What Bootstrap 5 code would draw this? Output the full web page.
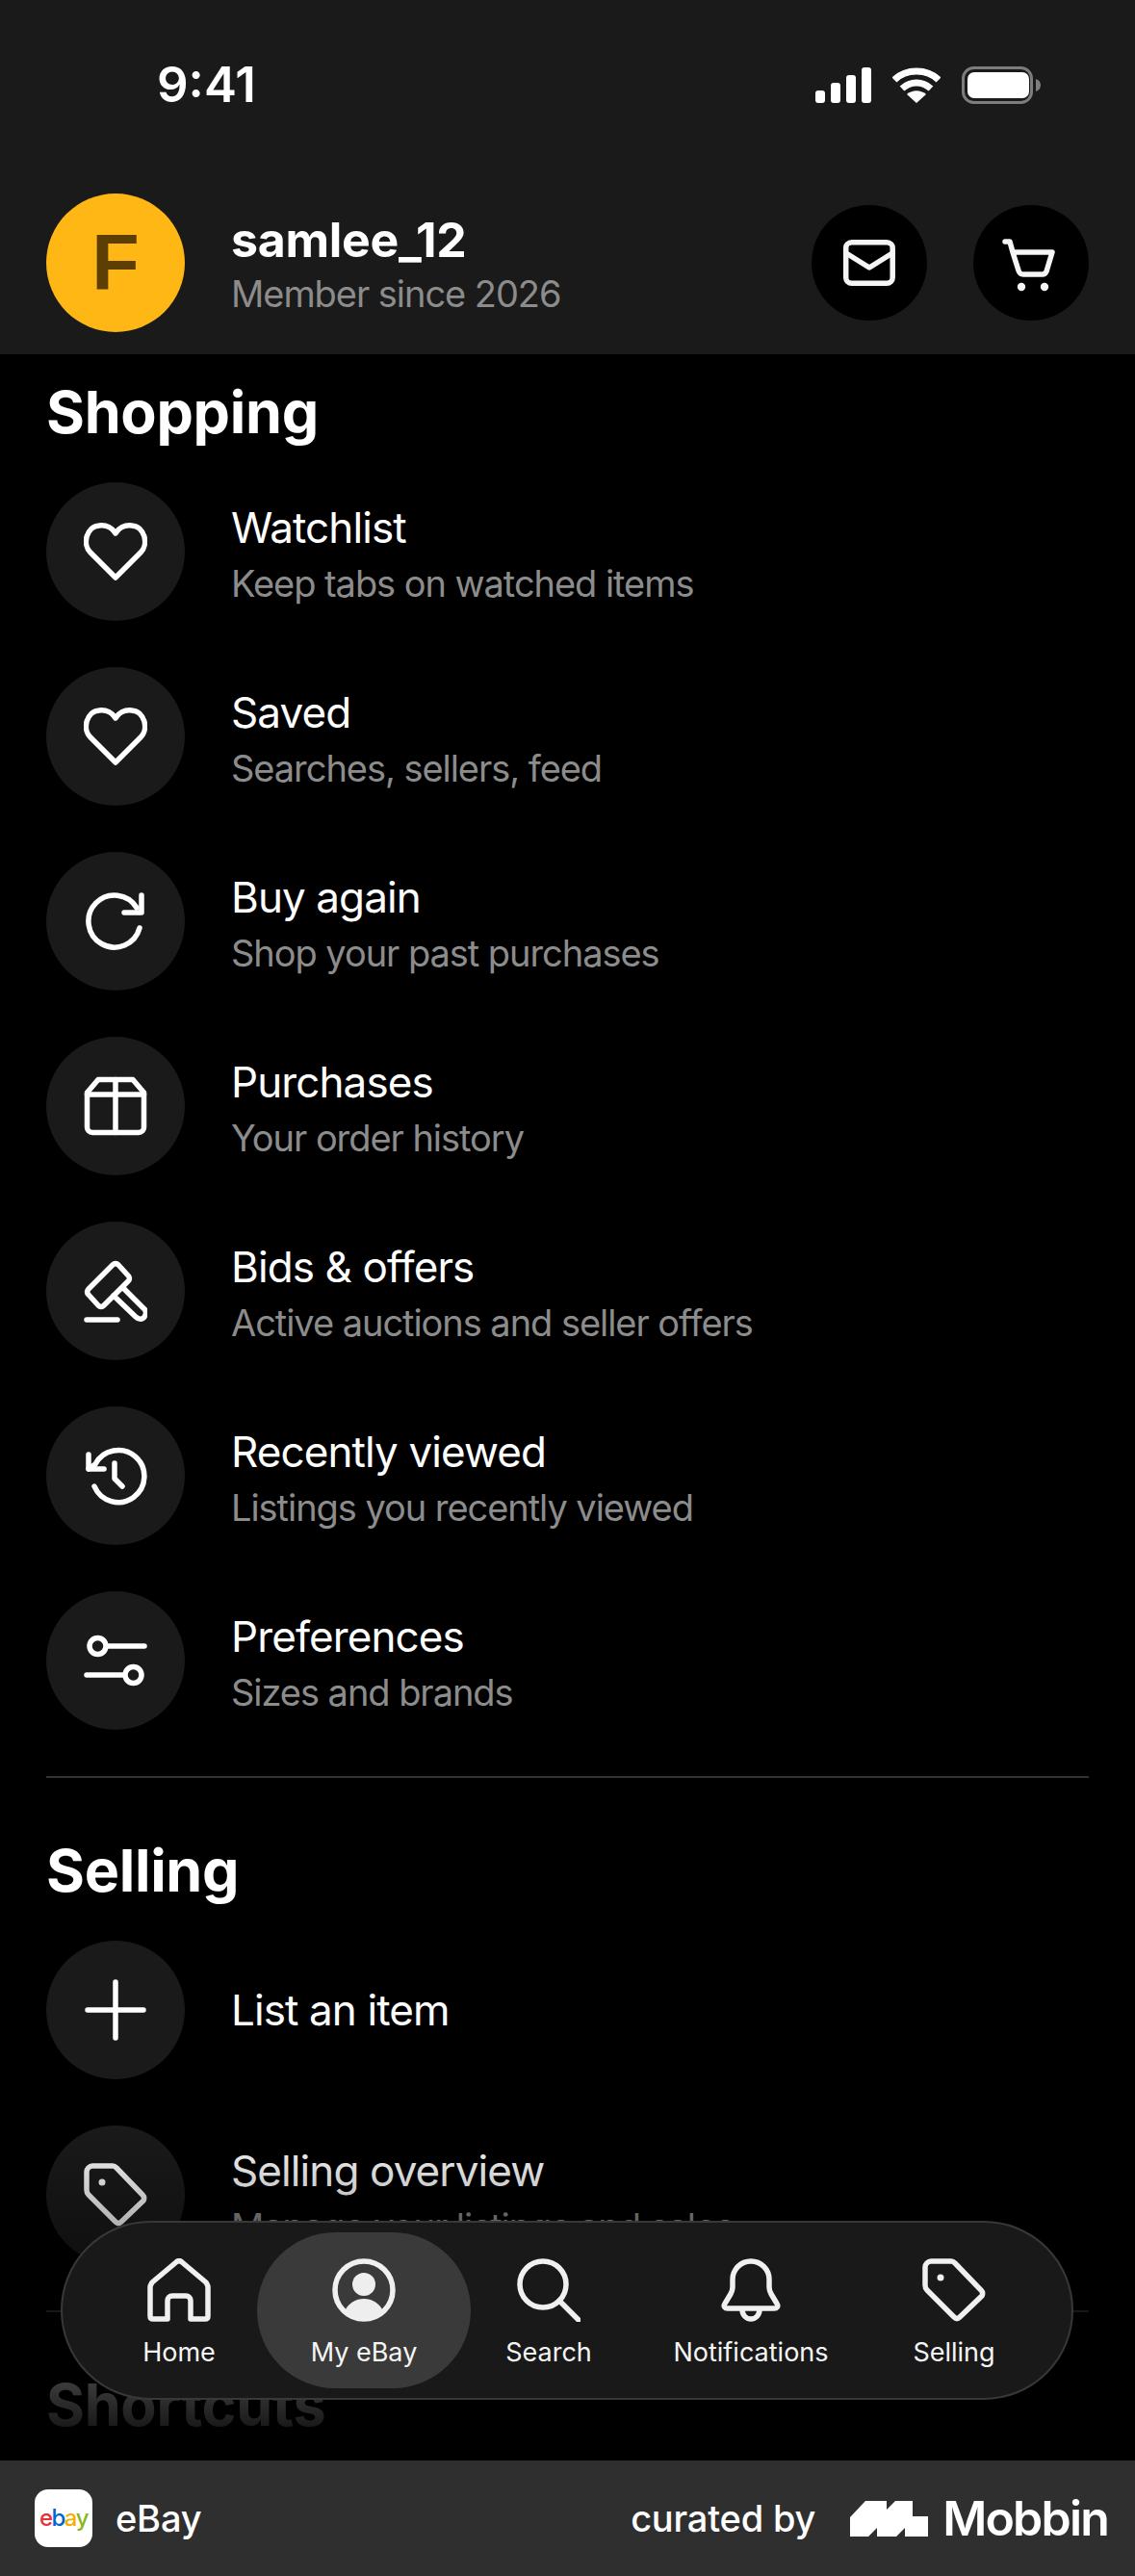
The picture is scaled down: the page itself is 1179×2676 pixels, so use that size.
<!DOCTYPE html>
<html lang="en">
<head>
  <meta charset="UTF-8" />
  <title>My eBay</title>
  <meta name="viewport" content="width=device-width, initial-scale=1">
  <link href="https://cdn.jsdelivr.net/npm/bootstrap@5.3.0/dist/css/bootstrap.min.css" rel="stylesheet">
  <style>
    body {
      width: 1179px;
      height: 2676px;
      overflow: hidden;
      background: #000;
      color: #fff;
      font-family: Inter, "Liberation Sans", sans-serif;
    }
    .phone { height: 2676px; position: relative; }
    .top-area { background: #1a1a1a; height: 368px; padding: 0 48px; }
    .status-row { height: 201px; padding: 58px 0 0 115px; }
    .clock { font-size: 51px; font-weight: 600; line-height: 60px; }
    .status-icons { margin-left: auto; padding-right: 50px; height: 60px; gap: 22px; }
    .avatar {
      width: 144px; height: 144px; border-radius: 50%;
      background: #feb714; color: #5d3f03;
      font-family: "Liberation Sans", sans-serif;
      font-size: 81px; font-weight: 700; line-height: 1;
    }
    .user-block { padding-top: 8px; }
    .user-name { font-size: 50px; font-weight: 700; line-height: 56px; letter-spacing: -.3px; }
    .user-since { font-size: 38px; color: #8c8c8c; line-height: 56px; letter-spacing: -1.05px; }
    .round-btn { width: 120px; height: 120px; border-radius: 50%; background: #000; border: 0; padding: 0; }
    .scroll-area { height: 2188px; overflow: hidden; padding: 0 48px; }
    .group-title { font-size: 61px; font-weight: 700; line-height: 72px; letter-spacing: -.3px; margin: 60px 0 37px; }
    .group-first { margin-top: 24px; }
    .menu-row { height: 144px; margin-bottom: 48px; gap: 48px; }
    .icon-disc { width: 144px; height: 144px; border-radius: 50%; background: #1a1a1a; flex: none; }
    .row-two { padding-top: 10px; }
    .row-title { font-size: 44px; line-height: 56px; letter-spacing: -.9px; }
    .row-sub { font-size: 38px; line-height: 60px; color: #8c8c8c; letter-spacing: -1.05px; }
    .split { border-top: 2px solid #333; }
    .fade-out {
      position: absolute; left: 0; right: 0; top: 2204px; height: 352px;
      background: linear-gradient(to bottom, rgba(0,0,0,0) 0%, #000 100%);
    }
    .tab-pill {
      position: absolute; left: 63px; top: 2307px; width: 1052px; height: 186px;
      border-radius: 93px; background: #191919; border: 2px solid #383838;
      padding: 10px 0 0 40px;
    }
    .tab-slot {
      height: 162px; flex: none;
      border-radius: 81px; color: #f5f5f5;
      font-size: 27px; line-height: 34px;
    }
    .tab-slot svg { margin-top: 27px; margin-bottom: 15px; }
    .tab-on { background: #3a3a3a; }
    .credit-bar { height: 120px; background: #2f2f2f; padding: 0 28px 0 36px; }
    .app-tile { width: 60px; height: 60px; border-radius: 14px; background: #fff; font-size: 24px; letter-spacing: -1.6px; font-weight: 500; }
    .credit-text { font-size: 38px; font-weight: 500; letter-spacing: -.2px; }
    .credit-gap { margin-right: 36px; }
    .mobbin { font-size: 50px; font-weight: 600; letter-spacing: -1.8px; margin-left: 15px; }
    .ebay-r { color: #e53238; }
    .ebay-b { color: #0064d2; }
    .ebay-y { color: #f5af02; }
    .ebay-g { color: #86b817; }
  </style>
</head>
<body>
  <div class="phone d-flex flex-column">

    <!-- Header -->
    <div class="top-area">
      <div class="status-row d-flex align-items-start">
        <div class="clock">9:41</div>
        <div class="status-icons d-flex align-items-center">
          <svg width="58" height="37" viewBox="0 0 58 37" fill="#fff"><rect x="0" y="24" width="10" height="13" rx="3"/><rect x="16" y="16" width="10" height="21" rx="3"/><rect x="32" y="8" width="10" height="29" rx="3"/><rect x="48" y="0" width="10" height="37" rx="3"/></svg>
          <svg width="50" height="37" viewBox="0 0 50 37" fill="none" stroke="#fff" stroke-width="7"><path d="M2 13C14 1 36 1 48 13"/><path d="M10 22c9-8 21-8 30 0"/><path d="M25 37l-10-9c6-5 14-5 20 0z" fill="#fff" stroke="none"/></svg>
          <svg width="82" height="39" viewBox="0 0 82 39" fill="none"><rect x="1.5" y="1.5" width="71" height="36" rx="11" stroke="#7d7d7d" stroke-width="3"/><rect x="6" y="6" width="64" height="27" rx="7" fill="#fff"/><path d="M77 13c3 1 5 3 5 6.500s-2 5.500-5 6.500z" fill="#7d7d7d"/></svg>
        </div>
      </div>
      <div class="d-flex align-items-center">
        <div class="avatar d-flex align-items-center justify-content-center">F</div>
        <div class="user-block ms-5 flex-grow-1">
          <div class="user-name">samlee_12</div>
          <div class="user-since">Member since 2026</div>
        </div>
        <button class="round-btn d-flex align-items-center justify-content-center me-5" type="button">
          <svg width="60" height="60" viewBox="0 0 60 60" fill="none" stroke="#f5f5f5" stroke-width="5.5" stroke-linejoin="round" stroke-linecap="round"><rect x="5.700" y="8.700" width="48.500" height="42.500" rx="6"/><path d="M6 20l24 15 24-15"/></svg>
        </button>
        <button class="round-btn d-flex align-items-center justify-content-center" type="button">
          <svg width="60" height="60" viewBox="0 0 60 60" fill="none" stroke="#f5f5f5" stroke-width="5.500" stroke-linejoin="round" stroke-linecap="round"><path d="M3 8h5l3 11 6 19c1 3 2 4 5 4h20c2 0 3-1 4-3l6-20H11"/><circle cx="20" cy="55" r="4.200" fill="#f5f5f5" stroke="none"/><circle cx="44" cy="55" r="4.200" fill="#f5f5f5" stroke="none"/></svg>
        </button>
      </div>
    </div>

    <!-- Scrolled list -->
    <div class="scroll-area">
      <h2 class="group-title group-first">Shopping</h2>
      <div id="shoppingList"></div>
      <div class="split"></div>
      <h2 class="group-title">Selling</h2>
      <div id="sellingList"></div>
      <div class="split"></div>
      <h2 class="group-title">Shortcuts</h2>
    </div>
    <div class="fade-out"></div>

    <!-- Floating tab bar -->
    <div class="tab-pill d-flex" id="tabs"></div>

    <!-- Credit bar -->
    <div class="credit-bar d-flex align-items-center">
      <div class="app-tile d-flex align-items-center justify-content-center">
        <span class="ebay-r">e</span><span class="ebay-b">b</span><span class="ebay-y">a</span><span class="ebay-g">y</span>
      </div>
      <div class="credit-text ms-4">eBay</div>
      <div class="credit-text ms-auto credit-gap">curated by</div>
      <svg width="81" height="37" viewBox="0 0 81 37" fill="#fff"><path d="M0 37V17L16 0H38V9L47 0H65V16H81V37H57V28L48 37H28V28L19 37z"/></svg>
      <div class="mobbin">Mobbin</div>
    </div>
  </div>

  <script>
    // Stroke icons, 66x66 box
    const tagPath = '<path d="M9 3H30c2 0 3 1 4 2L61 33c2 2 2 4 1 6L39 61c-2 2-4 2-6 0L5 33c-1-1-2-3-2-5V9c0-3 3-6 6-6z"/><circle cx="19" cy="20" r="3.500" fill="#fff" stroke="none"/>';
    const icons = {
      heart: '<path d="M33 60L7 34C-2 25 3 7 16 6c8-1 14 3 17 8 3-5 9-9 17-8 13 1 18 19 9 28z"/>',
      again: '<path d="M58 40A27 27 0 1 1 55 19"/><path d="M60 6V24H42"/>',
      box: '<path d="M15 5.500H51L62.500 19V55a5.500 5.500 0 0 1-5.500 5.500H9A5.500 5.500 0 0 1 3.500 55V19z"/><path d="M3.500 21H62.500M33 5.500V60.500"/>',
      gavel: '<path d="M30 6L5 31c-2 2-2 4 0 6L15 48c2 2 4 2 6 0L46 23c2-2 2-4 0-6L36 6c-2-2-4-2-6 0z"/><path d="M31 38L54 60c3 3 7 3 9 0 2-3 2-6 0-8L41 30"/><path d="M3 63H35"/>',
      history: '<path d="M11 44A27 27 0 1 0 12 21L5 26"/><path d="M5 11V26H21"/><path d="M32 20V36L40 44"/>',
      prefs: '<circle cx="14.500" cy="18" r="8.500"/><path d="M26 18H63"/><path d="M3 48H40"/><circle cx="51.500" cy="48" r="8.500"/>',
      plus: '<path d="M33 4V62M4 33H62"/>',
      tag: tagPath
    };

    function svgIcon(name) {
      return `<svg width="66" height="66" viewBox="0 0 66 66" fill="none" stroke="#fff" stroke-width="5.5" stroke-linecap="round" stroke-linejoin="round">${icons[name]}</svg>`;
    }

    function menuRow(item) {
      const sub = item.sub ? `<div class="row-sub">${item.sub}</div>` : '';
      return `<div class="menu-row d-flex align-items-center">
        <div class="icon-disc d-flex align-items-center justify-content-center">${svgIcon(item.icon)}</div>
        <div class="${item.sub ? 'row-two' : ''}"><div class="row-title">${item.title}</div>${sub}</div>
      </div>`;
    }

    const shopping = [
      { icon: 'heart', title: 'Watchlist', sub: 'Keep tabs on watched items' },
      { icon: 'heart', title: 'Saved', sub: 'Searches, sellers, feed' },
      { icon: 'again', title: 'Buy again', sub: 'Shop your past purchases' },
      { icon: 'box', title: 'Purchases', sub: 'Your order history' },
      { icon: 'gavel', title: 'Bids &amp; offers', sub: 'Active auctions and seller offers' },
      { icon: 'history', title: 'Recently viewed', sub: 'Listings you recently viewed' },
      { icon: 'prefs', title: 'Preferences', sub: 'Sizes and brands' }
    ];
    const selling = [
      { icon: 'plus', title: 'List an item' },
      { icon: 'tag', title: 'Selling overview', sub: 'Manage your listings and sales' }
    ];
    document.getElementById('shoppingList').innerHTML = shopping.map(menuRow).join('');
    document.getElementById('sellingList').innerHTML = selling.map(menuRow).join('');

    const tabIcons = {
      Home: '<path d="M3 30c0-2 1-3 2-5L30 4c2-2 4-2 6 0L61 25c1 2 2 3 2 5V60c0 2-1 3-3 3H45V44c0-3-2-5-5-5H26c-3 0-5 2-5 5V63H6c-2 0-3-1-3-3z"/>',
      'My eBay': '<circle cx="33" cy="33" r="30"/><circle cx="33" cy="27" r="12" fill="#eee" stroke="none"/><path d="M13 55c4-9 12-13 20-13s16 4 20 13c-5 5-12 8-20 8s-15-3-20-8z" fill="#eee" stroke="none"/>',
      Search: '<circle cx="27" cy="27" r="24"/><path d="M44 44l20 20"/>',
      Notifications: '<path d="M14 30V22a19 19 0 0 1 38 0v8c0 3 1 5 2 7l6 10c2 3 0 5-3 5H9c-3 0-5-2-3-5l6-10c1-2 2-4 2-7z"/><path d="M24 53c0 6 4 10 9 10s9-4 9-10"/>',
      Selling: tagPath.replace('#fff', '#f0f0f0')
    };
    const tabs = [
      { label: 'Home', width: 162 },
      { label: 'My eBay', width: 222, on: true },
      { label: 'Search', width: 162 },
      { label: 'Notifications', width: 258 },
      { label: 'Selling', width: 164 }
    ];
    document.getElementById('tabs').innerHTML = tabs.map(t => `
      <div class="tab-slot text-center ${t.on ? 'tab-on' : ''}" style="width:${t.width}px">
        <svg class="d-block mx-auto" width="66" height="66" viewBox="0 0 66 66" fill="none" stroke="#f0f0f0" stroke-width="5.5" stroke-linecap="round" stroke-linejoin="round">${tabIcons[t.label]}</svg>
        ${t.label}
      </div>`).join('');
  </script>
  <script src="https://cdn.jsdelivr.net/npm/bootstrap@5.3.0/dist/js/bootstrap.bundle.min.js"></script>
</body>
</html>
